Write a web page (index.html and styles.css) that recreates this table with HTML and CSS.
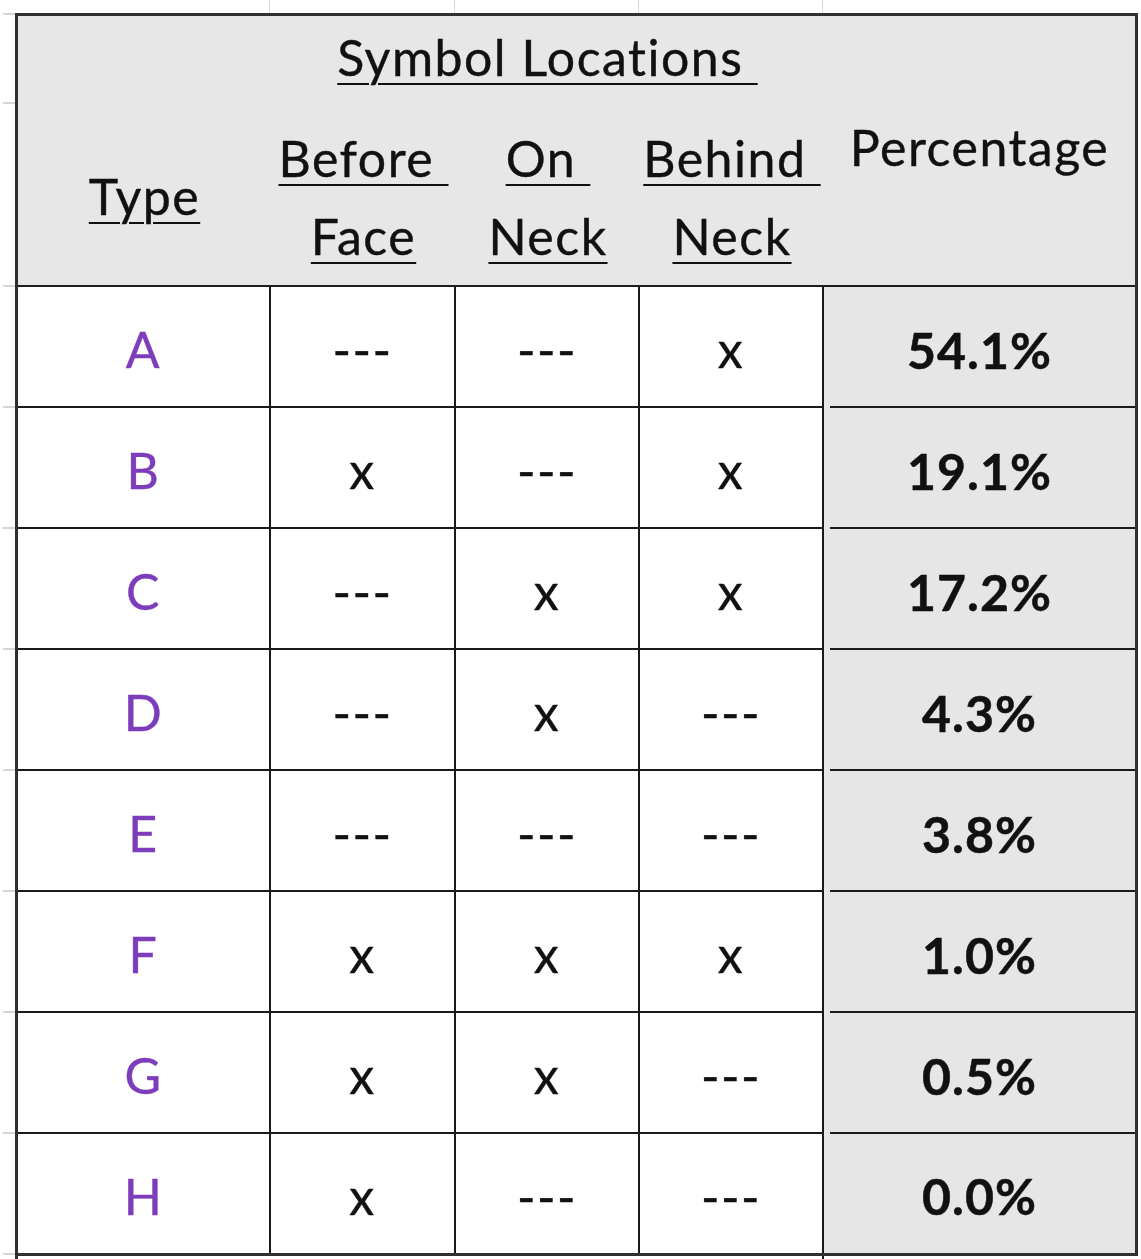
FILE: index.html
```html
<!DOCTYPE html>
<html lang="en">
<head>
<meta charset="utf-8">
<title>Symbol Locations</title>
<link rel="stylesheet" href="styles.css">
</head>
<body>
<div class="sheet">
  <div class="gutter">
    <div class="tick t0"></div>
    <div class="tick t1"></div>
    <div class="tick t2"></div>
    <div class="tick tr"></div>
    <div class="tick tr"></div>
    <div class="tick tr"></div>
    <div class="tick tr"></div>
    <div class="tick tr"></div>
    <div class="tick tr"></div>
    <div class="tick tr"></div>
    <div class="tick tr"></div>
  </div>
  <div class="top">
    <div></div><div></div><div></div><div></div><div class="end"></div>
  </div>
  <div class="table">
    <div class="head">
      <div class="h-type"><span class="u">Type</span></div>
      <div class="h-group">
        <div class="h-title"><span class="u">Symbol Locations&nbsp;</span></div>
        <div class="h-cols">
          <div class="h-col"><span class="u">Before&nbsp;</span><br><span class="u">Face</span></div>
          <div class="h-col"><span class="u">On&nbsp;</span><br><span class="u">Neck</span></div>
          <div class="h-col"><span class="u">Behind&nbsp;</span><br><span class="u">Neck</span></div>
        </div>
      </div>
      <div class="h-pct">Percentage</div>
    </div>

    <div class="c type">A</div><div class="c">---</div><div class="c">---</div><div class="c">x</div><div class="c pct">54.1%</div>
    <div class="c type">B</div><div class="c">x</div><div class="c">---</div><div class="c">x</div><div class="c pct">19.1%</div>
    <div class="c type">C</div><div class="c">---</div><div class="c">x</div><div class="c">x</div><div class="c pct">17.2%</div>
    <div class="c type">D</div><div class="c">---</div><div class="c">x</div><div class="c">---</div><div class="c pct">4.3%</div>
    <div class="c type">E</div><div class="c">---</div><div class="c">---</div><div class="c">---</div><div class="c pct">3.8%</div>
    <div class="c type">F</div><div class="c">x</div><div class="c">x</div><div class="c">x</div><div class="c pct">1.0%</div>
    <div class="c type">G</div><div class="c">x</div><div class="c">x</div><div class="c">---</div><div class="c pct">0.5%</div>
    <div class="c type last">H</div><div class="c last">x</div><div class="c last">---</div><div class="c last">---</div><div class="c pct last">0.0%</div>
  </div>
  <div class="tail"><div></div><div></div></div>
</div>
</body>
</html>
```
FILE: styles.css
```css
html, body {
  margin: 0;
  background: #ffffff;
}

body {
  font-family: Lato, "Open Sans", "Liberation Sans", sans-serif;
  font-size: 50px;
  letter-spacing: 1.5px;
  color: #111111;
  -webkit-text-stroke: 0.4px currentColor;
}

.sheet {
  display: grid;
  grid-template-columns: 15px 1123px;
  grid-template-rows: 13px auto auto;
}

/* spreadsheet gridline ticks in the left margin */
.gutter {
  grid-row: 1 / 4;
  grid-column: 1;
  display: flex;
  flex-direction: column;
}

.tick {
  box-sizing: border-box;
  margin-left: 3px;
  border-bottom: 2px solid #d6d6d6;
  flex: none;
}

.t0 { height: 15px; }
.t1 { height: 89px; }
.t2 { height: 183px; }
.tr { height: 121px; }

/* faint gridlines above the table */
.top {
  grid-row: 1;
  grid-column: 2;
  display: grid;
  grid-template-columns: 255px 185px 184px 184px 1fr;
}

.top div {
  border-right: 1px solid #dadada;
}

.top .end {
  border-right: 0;
}

.table {
  grid-row: 2;
  grid-column: 2;
  display: grid;
  grid-template-columns: 253px 185px 184px 184px 311px;
  border: 3px solid #303030;
}

.head {
  grid-column: 1 / -1;
  height: 271px;
  box-sizing: border-box;
  border-bottom: 2px solid #1e1e1e;
  background: #e7e7e7;
  display: grid;
  grid-template-columns: 253px 553px 311px;
  line-height: 78px;
}

.u {
  text-decoration: underline;
  text-decoration-thickness: 2px;
  text-underline-offset: 7px;
}

.h-type {
  padding-top: 141px;
  text-align: center;
}

.h-group {
  padding-top: 2px;
}

.h-title {
  text-align: center;
  margin-bottom: 23px;
}

.h-cols {
  display: grid;
  grid-template-columns: 185px 184px 184px;
}

.h-col {
  text-align: center;
}

.h-pct {
  padding-top: 92px;
  text-align: center;
}

.c {
  box-sizing: border-box;
  height: 121px;
  padding-top: 4px;
  border-right: 2px solid #1a1a1a;
  border-bottom: 2px solid #1a1a1a;
  display: flex;
  align-items: center;
  justify-content: center;
  line-height: normal;
  background: #ffffff;
}

.type {
  color: #7d3dbb;
}

.pct {
  border-right: 0;
  border-bottom: 0;
  font-weight: 700;
  letter-spacing: 1px;
  -webkit-text-stroke: 0.5px currentColor;
  background:
    linear-gradient(#1a1a1a, #1a1a1a) no-repeat right bottom / calc(100% - 6px) 2px,
    #e6e6e6;
}

.c.last {
  height: 119px;
  border-bottom: 0;
}

.pct.last {
  background: #e6e6e6;
}

/* start of the next spreadsheet row below the table */
.tail {
  grid-row: 3;
  grid-column: 2;
  height: 4px;
  display: grid;
  grid-template-columns: 809px 1fr;
}

.tail div:first-child {
  border-left: 3px solid #303030;
  border-right: 2px solid #1a1a1a;
}
```
